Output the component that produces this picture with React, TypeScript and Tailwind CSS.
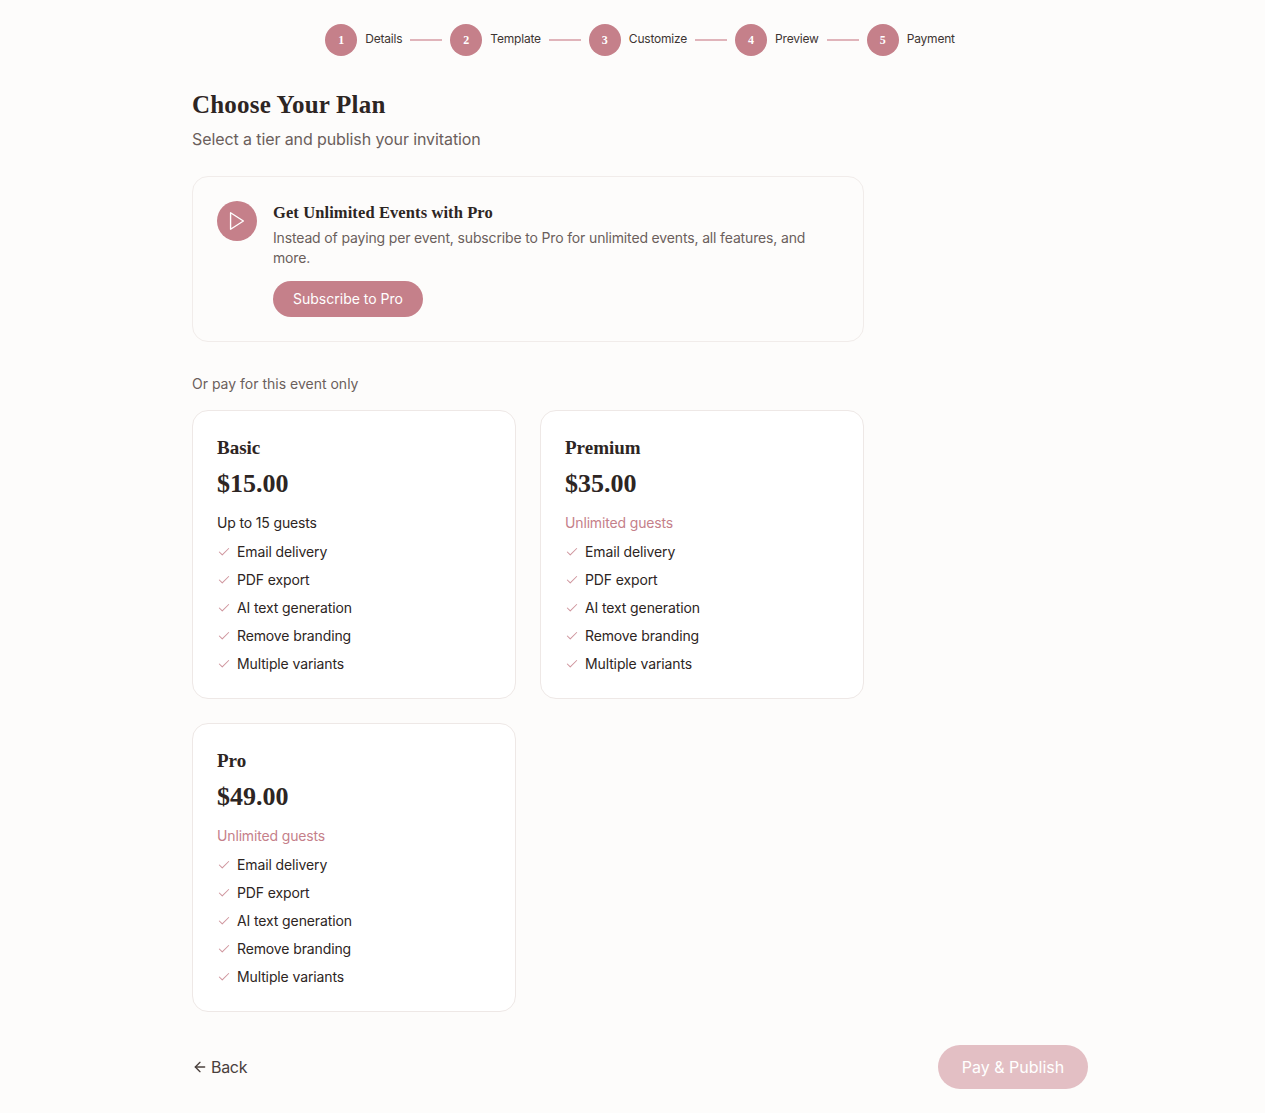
import { ArrowLeft, Check } from 'lucide-react'

const sans = "font-['Inter','Noto_Sans',sans-serif]"
const serif = "font-['Liberation_Serif',serif]"

const steps = ['Details', 'Template', 'Customize', 'Preview', 'Payment']
const features = ['Email delivery', 'PDF export', 'AI text generation', 'Remove branding', 'Multiple variants']

function Stepper() {
  return (
    <div className="flex items-center justify-center gap-2 pt-6">
      {steps.map((step, i) => (
        <div key={step} className="flex items-center gap-2">
          <div className={`flex h-8 w-8 items-center justify-center rounded-full bg-[#c5808a] text-xs font-bold text-white ${serif}`}>
            {i + 1}
          </div>
          <span className="pb-0.5 text-xs tracking-[-0.2px] text-[#3d3533]">{step}</span>
          {i < steps.length - 1 && <div className="h-0.5 w-8 bg-[#e0b4ba]" />}
        </div>
      ))}
    </div>
  )
}

function PlanCard({ name, price, guests, highlight }: { name: string; price: string; guests: string; highlight?: boolean }) {
  return (
    <div className="rounded-2xl border border-[#eee8e6] bg-white p-6">
      <h3 className={`text-[19px] leading-[26px] font-bold text-[#2d2523] ${serif}`}>{name}</h3>
      <p className={`mt-[7px] text-[26px] leading-8 font-bold text-[#2d2523] ${serif}`}>{price}</p>
      <p className={`mt-[13px] text-sm leading-5 tracking-[-0.15px] ${highlight ? 'text-[#c5808a]' : 'text-[#2d2523]'}`}>{guests}</p>
      <ul className="mt-[9px] flex flex-col gap-2">
        {features.map((f) => (
          <li key={f} className="flex items-center gap-1.5 text-sm leading-5 tracking-[-0.12px] text-[#2d2523]">
            <Check className="h-3.5 w-3.5 text-[#cf959d]" strokeWidth={1.75} />
            {f}
          </li>
        ))}
      </ul>
    </div>
  )
}

export default function App() {
  return (
    <div className={`min-h-[1113px] bg-[#fdfcfb] ${sans}`}>
      <div className="ml-[192px] w-[896px] pb-6">
        <Stepper />

        <div className="w-[672px]">
          <h1 className={`mt-[33px] text-[25px] leading-8 font-bold tracking-[0.2px] text-[#2d2523] ${serif}`}>Choose Your Plan</h1>
          <p className="mt-[6px] text-base leading-6 tracking-[-0.1px] text-[#6b5f5c]">Select a tier and publish your invitation</p>

          <div className="mt-[25px] flex gap-4 rounded-2xl border border-[#f1ecea] bg-[#fdfcfb] p-6">
            <div className="flex h-10 w-10 shrink-0 items-center justify-center rounded-full bg-[#c5808a]">
              <svg viewBox="1 0 24 24" className="h-[22px] w-[22px]" fill="none" stroke="white" strokeWidth={1.5} strokeLinejoin="round">
                <polygon points="6 3 20 12 6 21 6 3" />
              </svg>
            </div>
            <div>
              <h2 className={`text-[16.5px] leading-6 font-bold tracking-[0.1px] text-[#2d2523] ${serif}`}>Get Unlimited Events with Pro</h2>
              <p className="mt-[3px] text-sm leading-5 tracking-[-0.15px] text-[#6b5f5c]">
                Instead of paying per event, subscribe to Pro for unlimited events, all features, and more.
              </p>
              <button className="mt-[13px] h-9 w-[150px] rounded-full bg-[#c5808a] text-sm text-white">Subscribe to Pro</button>
            </div>
          </div>

          <p className="mt-8 text-sm leading-5 text-[#6b5f5c]">Or pay for this event only</p>

          <div className="mt-4 grid grid-cols-2 gap-6">
            <PlanCard name="Basic" price="$15.00" guests="Up to 15 guests" />
            <PlanCard name="Premium" price="$35.00" guests="Unlimited guests" highlight />
            <PlanCard name="Pro" price="$49.00" guests="Unlimited guests" highlight />
          </div>
        </div>

        <div className="mt-[33px] flex items-center justify-between">
          <button className="flex items-center gap-[3px] text-base tracking-[-0.3px] text-[#4a403d]">
            <ArrowLeft className="h-4 w-4" />
            Back
          </button>
          <button className="h-11 w-[150px] rounded-full bg-[#e3bfc4] text-base text-white">Pay &amp; Publish</button>
        </div>
      </div>
    </div>
  )
}
